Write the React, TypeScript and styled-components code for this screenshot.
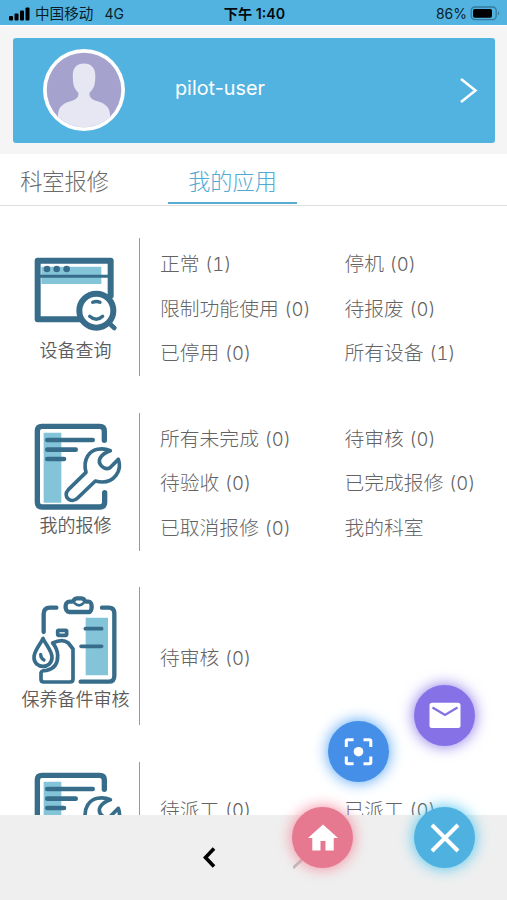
import React from "react";
import styled, { createGlobalStyle } from "styled-components";

const GlobalStyle = createGlobalStyle`
  * { box-sizing: border-box; }
  body { margin: 0; background: #fff; }
`;

const cjk = `"Noto Sans CJK SC", sans-serif`;
const line = "#376d8b";
const fill = "#84c4d9";

const Screen = styled.div`
  position: relative;
  display: flex;
  flex-direction: column;
  width: 507px;
  height: 900px;
  overflow: hidden;
  background: #fff;
  font-family: Inter, ${cjk};
`;

const StatusBar = styled.header`
  flex: none;
  display: grid;
  grid-template-columns: 1fr auto 1fr;
  align-items: center;
  height: 25px;
  padding: 2px 6px 0 8px;
  background: #52b3e1;
  color: #0b1e28;
  font-size: 14px;
  line-height: 20px;
`;

const StatusGroup = styled.div<{ $end?: boolean }>`
  display: flex;
  align-items: center;
  gap: ${(p) => (p.$end ? "3px" : "0")};
  justify-content: ${(p) => (p.$end ? "flex-end" : "flex-start")};
`;

const Carrier = styled.span`
  margin: 0 11px 0 5px;
  font-size: 14.6px;
`;

const Clock = styled.span`
  font-weight: 600;
  font-size: 14.2px;
  color: #03090c;
`;

const ProfileArea = styled.section`
  flex: none;
  height: 129px;
  padding: 12px 12px 0 13px;
  border-top: 1px solid #fff;
  background: #f5f5f5;
`;

const ProfileCard = styled.div`
  display: flex;
  align-items: center;
  height: 105px;
  padding: 0 17px 2px 30px;
  border-radius: 3px;
  background: #52b3e1;
`;

const UserName = styled.span`
  flex: 1;
  margin: -3px 0 0 50px;
  color: #fff;
  font-size: 19.8px;
  line-height: 26px;
`;

const Tabs = styled.nav`
  flex: none;
  display: flex;
  height: 52px;
  border-bottom: 1px solid #dedede;
`;

const Tab = styled.div<{ $active?: boolean }>`
  width: 129px;
  height: 50px;
  margin-right: 39px;
  padding-top: 10px;
  border-bottom: 2px solid ${(p) => (p.$active ? "#58add0" : "transparent")};
  color: ${(p) => (p.$active ? "#4faad4" : "#6a6a6a")};
  text-align: center;
  font-family: ${cjk};
  font-weight: 300;
  font-size: 22.2px;
  line-height: 32px;
`;

const Content = styled.main`
  flex: 1;
  min-height: 0;
  display: flex;
  flex-direction: column;
  gap: 36.7px;
  padding-top: 32px;
  overflow: hidden;
`;

const AppRow = styled.section`
  flex: none;
  display: flex;
  height: 138px;
`;

const AppTile = styled.div`
  flex: none;
  display: flex;
  flex-direction: column;
  align-items: center;
  width: 140px;
  padding-left: 12px;
  border-right: 1px solid #999;
`;

const TileIcon = styled.svg`
  flex: none;
  width: 100px;
  height: 100px;
`;

const TileLabel = styled.span`
  margin-top: -2px;
  color: #5c5c5c;
  font-family: ${cjk};
  font-weight: 350;
  font-size: 18px;
  line-height: 26px;
  white-space: nowrap;
`;

const Links = styled.div<{ $top?: boolean }>`
  flex: 1;
  display: grid;
  grid-template-columns: 184.5px 1fr;
  grid-auto-rows: 44.6px;
  align-content: ${(p) => (p.$top ? "start" : "center")};
  align-items: center;
  padding: ${(p) => (p.$top ? "25.5px" : "2px")} 0 0 20px;
`;

const LinkText = styled.span`
  color: #636363;
  font-family: ${cjk};
  font-weight: 300;
  font-size: 19.8px;
  line-height: 28px;
  white-space: nowrap;
`;

const Count = styled.span`
  margin-left: 5.5px;
  font-family: Inter, sans-serif;
  font-weight: 300;
  font-size: 18.5px;
  font-variant-numeric: tabular-nums;
`;

const BottomBar = styled.footer`
  flex: none;
  display: flex;
  align-items: center;
  gap: 76px;
  height: 85px;
  padding-left: 202px;
  background: #efefef;
`;

const Fab = styled.button<{ $x: number; $y: number; $color: string; $glow: string }>`
  position: absolute;
  left: ${(p) => p.$x}px;
  top: ${(p) => p.$y}px;
  display: flex;
  align-items: center;
  justify-content: center;
  width: 61px;
  height: 61px;
  padding: 0;
  border: 0;
  border-radius: 50%;
  background: ${(p) => p.$color};
  box-shadow: 0 0 15px ${(p) => p.$glow};
`;

const SignalIcon = () => (
  <svg width="22" height="16" viewBox="0 0 22 16" fill="#000">
    <rect x="1" y="10" width="4" height="4.500" rx="1" />
    <rect x="6.500" y="7.500" width="4" height="7" rx="1" />
    <rect x="12" y="4.500" width="4" height="10" rx="1" />
    <rect x="17.500" y="1.500" width="4" height="13" rx="1" />
  </svg>
);

const BatteryIcon = () => (
  <svg width="31" height="15" viewBox="0 0 31 15">
    <rect x="1.200" y="1" width="25" height="12.600" rx="3.600" fill="none" stroke="#347b9d" strokeWidth="1.300" />
    <rect x="3" y="3" width="19" height="8.700" rx="1.800" fill="#000" />
    <path d="M28 5q2.400 2.300 0 4.600z" fill="#347b9d" />
  </svg>
);

const Avatar = () => (
  <svg width="82" height="82" viewBox="0 0 82 82">
    <defs>
      <clipPath id="face"><circle cx="41" cy="41" r="37.300" /></clipPath>
    </defs>
    <circle cx="41" cy="41" r="41" fill="#fff" />
    <circle cx="41" cy="41" r="37.300" fill="#a5a3cd" />
    <path
      clipPath="url(#face)"
      fill="#e7e7f3"
      d="M41 14.500c-7 0-11.200 4.400-11.200 11.500 0 9 1 13.500 5.400 17.500 1 3.500-1 6.500-7 8.500-9 2.500-12.500 6-13.200 13.500L15 80h53l-1-14.500c-.7-7.500-4.300-11-13.300-13.500-6-2-8-5-7-8.500 4.600-4 5.600-8.500 5.600-17.500 0-7-4.300-11.500-11.300-11.500z"
    />
  </svg>
);

const QueryIcon = () => (
  <TileIcon viewBox="18 9 300 300" fill="none" stroke={line} strokeLinecap="round" strokeLinejoin="round">
    <path d="M64 95h180v52H64z" fill={fill} stroke="none" />
    <path d="M178 253H53V77h219v105" strokeWidth="18" />
    <path d="M60 124h205" strokeWidth="9" />
    <g fill={line} stroke="none">
      <circle cx="81" cy="102" r="10" />
      <circle cx="110" cy="102" r="10" />
      <circle cx="140" cy="102" r="10" />
    </g>
    <circle cx="229" cy="227" r="51" fill="#fff" strokeWidth="18" />
    <path d="M270 267l13 12" strokeWidth="14" />
    <path d="M218 202q11-5 22 0M209 244q20 18 39 0" strokeWidth="10" />
  </TileIcon>
);

const RepairIcon = () => (
  <TileIcon viewBox="18 8 300 300" fill="none" stroke={line} strokeLinecap="round" strokeLinejoin="round">
    <path d="M71 67h53v210H71z" fill={fill} stroke="none" />
    <path d="M253 90V62q0-14-14-14H66q-14 0-14 14v214q0 14 14 14h174q14 0 14-14v-29" strokeWidth="16" />
    <path d="M82 89h136M82 118h85M82 146h50" strokeWidth="14" />
    <path
      strokeWidth="11"
      d="M271 121C246 110 216 116 203 137c-9 15-10 31-5 49l-53 52c-19 20 8 45 28 25l53-51c26 7 48 1 62-17 12-16 13-32 7-48l-26 26c-17 7-37-11-29-29 6-11 17-19 31-23z"
    />
  </TileIcon>
);

const PartsIcon = () => (
  <TileIcon viewBox="33 7 300 300" fill="none" stroke={line} strokeLinecap="round" strokeLinejoin="round">
    <path d="M212 99h67v173h-67z" fill={fill} stroke="none" />
    <path d="M86 142V88q0-19 19-19h19M261 69h20q17 0 17 17v187q0 18-17 18h-84" strokeWidth="13" />
    <path d="M163 51h9c4 0 4-10 14-10h13c10 0 10 10 14 10h8c12 0 12 31 0 31h-58c-15 0-15-31 0-31z" strokeWidth="13" />
    <path d="M179 56q13 12 26 0" strokeWidth="8" />
    <path d="M211 132h49M198 185h62" strokeWidth="11" />
    <rect x="128" y="137" width="27" height="15" rx="3" strokeWidth="11" />
    <path d="M113 175q30-14 47 0l14 18v91q0 8-9 8H86q-8 0-8-8v-20q2-7 17-7 34-7 33-44 0-20-15-38z" strokeWidth="11" />
    <path d="M84 161c-7 17-27 37-27 57 0 36 54 36 54 0 0-20-20-40-27-57z" strokeWidth="11" />
    <path d="M77 209q0 12 10 17" strokeWidth="10" />
  </TileIcon>
);

const MailIcon = () => (
  <svg width="32" height="27" viewBox="0 0 32 27">
    <rect x="0.500" y="0.800" width="31" height="25.200" rx="2.500" fill="#fff" />
    <path d="M3.500 5.500L16 13l12.500-7.500" fill="none" stroke="#8670e4" strokeWidth="2.300" />
  </svg>
);

const ScanIcon = () => (
  <svg width="30" height="30" viewBox="0 0 30 30">
    <path
      d="M2.300 10V4q0-1.300 1.300-1.300h6M19.500 2.700h6q1.300 0 1.300 1.300v6M26.800 19.500v6q0 1.300-1.300 1.300h-6M9.600 26.800h-6q-1.300 0-1.300-1.300v-6"
      fill="none"
      stroke="#fff"
      strokeWidth="3"
    />
    <circle cx="14.500" cy="14.700" r="4.800" fill="#fff" />
  </svg>
);

const HomeIcon = () => (
  <svg width="30" height="28" viewBox="0 0 30 28">
    <path d="M15 0.500L0 14h4.300v12.500h8.200V17h5v9.500h8.200V14H30z" fill="#fff" />
  </svg>
);

const CloseIcon = () => (
  <svg width="30" height="30" viewBox="0 0 30 30" stroke="#fff" strokeWidth="4">
    <path d="M2 2l26 26M28 2L2 28" />
  </svg>
);

type Item = [string, number?];

type Row = { id: string; label?: string; Icon: React.FC; items: Item[]; top?: boolean };

const rows: Row[] = [
  {
    id: "query",
    label: "设备查询",
    Icon: QueryIcon,
    items: [["正常", 1], ["停机", 0], ["限制功能使用", 0], ["待报废", 0], ["已停用", 0], ["所有设备", 1]],
  },
  {
    id: "repair",
    label: "我的报修",
    Icon: RepairIcon,
    items: [["所有未完成", 0], ["待审核", 0], ["待验收", 0], ["已完成报修", 0], ["已取消报修", 0], ["我的科室"]],
  },
  { id: "parts", label: "保养备件审核", Icon: PartsIcon, items: [["待审核", 0]] },
  { id: "dispatch", Icon: RepairIcon, items: [["待派工", 0], ["已派工", 0]], top: true },
];

export default function App() {
  return (
    <>
      <GlobalStyle />
      <Screen>
        <StatusBar>
          <StatusGroup>
            <SignalIcon />
            <Carrier>中国移动</Carrier>
            <span>4G</span>
          </StatusGroup>
          <Clock>下午 1:40</Clock>
          <StatusGroup $end>
            <span>86%</span>
            <BatteryIcon />
          </StatusGroup>
        </StatusBar>
        <ProfileArea>
          <ProfileCard>
            <Avatar />
            <UserName>pilot-user</UserName>
            <svg width="19" height="26" viewBox="0 0 19 26">
              <path d="M2 2L16.500 13.500 2 25" fill="none" stroke="#fff" strokeWidth="2.500" />
            </svg>
          </ProfileCard>
        </ProfileArea>
        <Tabs>
          <Tab>科室报修</Tab>
          <Tab $active>我的应用</Tab>
        </Tabs>
        <Content>
          {rows.map(({ id, label, Icon, items, top }) => (
            <AppRow key={id}>
              <AppTile>
                <Icon />
                {label && <TileLabel>{label}</TileLabel>}
              </AppTile>
              <Links $top={top}>
                {items.map(([name, count]) => (
                  <LinkText key={name}>
                    {name}
                    {count !== undefined && <Count>({count})</Count>}
                  </LinkText>
                ))}
              </Links>
            </AppRow>
          ))}
        </Content>
        <BottomBar>
          <svg width="15" height="24" viewBox="0 0 15 24">
            <path d="M12 2.500L3.500 11.500 12 20.500" fill="none" stroke="#000" strokeWidth="3.600" />
          </svg>
          <svg width="15" height="24" viewBox="0 0 15 24">
            <path d="M2 3l9 9-11 10" fill="none" stroke="#bebebe" strokeWidth="3" />
          </svg>
        </BottomBar>
        <Fab $x={414} $y={685} $color="#8672e6" $glow="#8672e6"><MailIcon /></Fab>
        <Fab $x={328} $y={721} $color="#468fe8" $glow="#4c9ff5"><ScanIcon /></Fab>
        <Fab $x={292} $y={807} $color="#e67990" $glow="#f58498"><HomeIcon /></Fab>
        <Fab $x={414} $y={807} $color="#4eb1df" $glow="#45c3ee"><CloseIcon /></Fab>
      </Screen>
    </>
  );
}
